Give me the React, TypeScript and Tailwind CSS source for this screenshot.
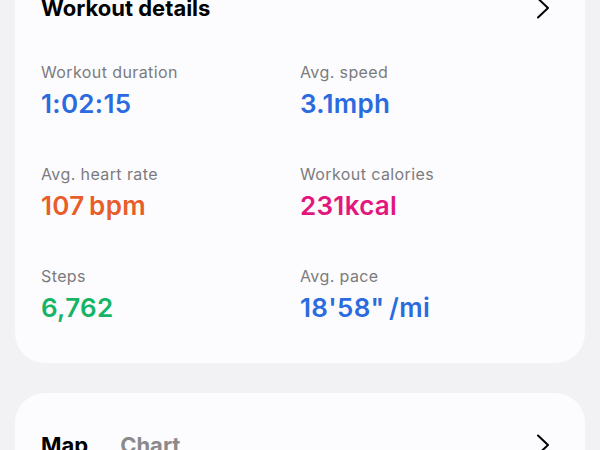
import React from 'react';

type Stat = {
    label: string;
    value: string;
    color: string;
};

const stats: Stat[] = [
    { label: 'Workout duration', value: '1:02:15', color: 'text-[#2b6be0]' },
    { label: 'Avg. speed', value: '3.1mph', color: 'text-[#2b6be0]' },
    { label: 'Avg. heart rate', value: '107\u2009bpm', color: 'text-[#e85e2b]' },
    { label: 'Workout calories', value: '231kcal', color: 'text-[#e2167c]' },
    { label: 'Steps', value: '6,762', color: 'text-[#15b466]' },
    { label: 'Avg. pace', value: '18\'58"\u2009/mi', color: 'text-[#2b6be0]' },
];

function Chevron() {
    return (
        <svg width="14" height="22" viewBox="0 0 14 22" fill="none" className="text-black">
            <polyline points="2,1.5 12,11 2,20.5" stroke="currentColor" strokeWidth="2" strokeLinecap="round" strokeLinejoin="round" />
        </svg>
    );
}

export default function App() {
    return (
        <div className="min-h-screen bg-[#f2f2f4] px-[15px] font-['Inter',sans-serif] overflow-hidden h-[450px]">
            {/* Workout details card */}
            <div className="-mt-[30px] rounded-[30px] bg-[#fcfcfe] px-[26px] pt-[24px] pb-[37px]">
                <div className="flex h-[28px] items-center justify-between">
                    <h2 className="text-[22px] font-bold text-black leading-[28px]">Workout details</h2>
                    <div className="mr-[9px]">
                        <Chevron />
                    </div>
                </div>

                <div className="mt-[38px] grid grid-cols-2 gap-y-[40px]">
                    {stats.map((s) => (
                        <div key={s.label}>
                            <div className="text-[16px] leading-[24px] tracking-[0.4px] text-[#7b7b7d]">{s.label}</div>
                            <div className={`mt-[1px] text-[26px] leading-[37px] font-semibold tracking-[0.3px] ${s.color}`}>
                                {s.value}
                            </div>
                        </div>
                    ))}
                </div>
            </div>

            {/* Map / Chart card */}
            <div className="mt-[30px] rounded-t-[30px] bg-[#fcfcfe] px-[26px] pt-[38px] h-[120px]">
                <div className="flex items-center justify-between">
                    <div className="flex items-center gap-[32px]">
                        <span className="text-[22px] font-bold text-black leading-[28px]">Map</span>
                        <span className="text-[22px] font-bold text-[#8a8a8c] leading-[28px]">Chart</span>
                    </div>
                    <div className="mr-[9px]">
                        <Chevron />
                    </div>
                </div>
            </div>
        </div>
    );
}
